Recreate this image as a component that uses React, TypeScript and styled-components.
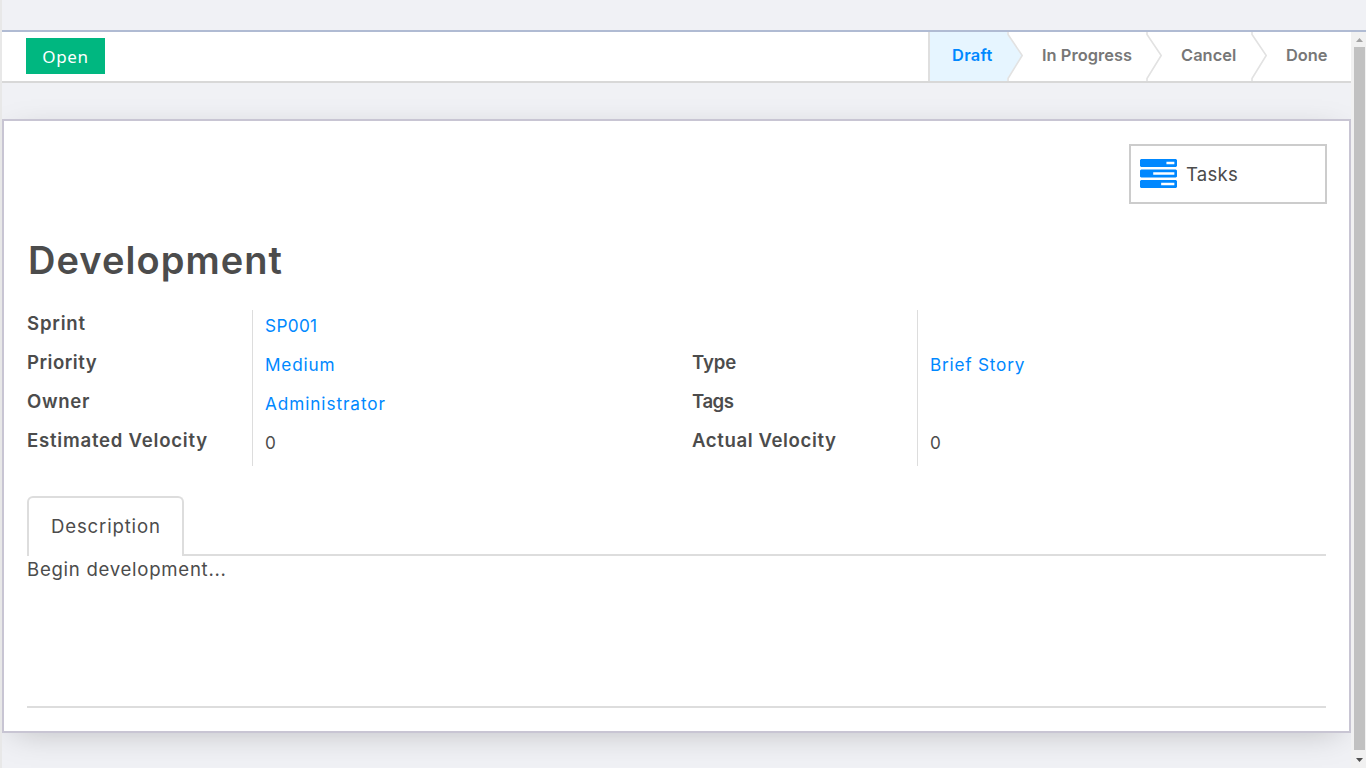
import React from 'react';
import styled, { createGlobalStyle } from 'styled-components';

const GlobalStyle = createGlobalStyle`
  * { box-sizing: border-box; }
  body {
    margin: 0;
    overflow: hidden;
    background: #f0f1f5;
    color: #4c4c4c;
    font-family: Inter, 'Liberation Sans', sans-serif;
  }
`;

const Page = styled.div`
  display: flex;
  flex-direction: column;
  height: 768px;
  border-left: 2px solid #e8e8e8;
`;

const TopStrip = styled.div`
  flex: none;
  height: 32px;
  background: #f0f1f5;
  border-bottom: 2px solid #b0bbd3;
`;

const Body = styled.div`
  display: flex;
  flex: 1;
  min-height: 0;
`;

const Content = styled.main`
  display: flex;
  flex-direction: column;
  flex: 1;
  overflow: hidden;
`;

const StatusBar = styled.header`
  flex: none;
  display: flex;
  justify-content: space-between;
  height: 51px;
  padding-left: 24px;
  background: #fff;
  border-bottom: 2px solid #d8d8d8;
`;

const OpenButton = styled.button`
  width: 79px;
  height: 36px;
  margin-top: 6px;
  padding: 1px 0 0;
  border: 0;
  background: #00b780;
  color: #fff;
  font: 17px/35px 'Noto Sans', sans-serif;
  letter-spacing: 0.7px;
`;

const Steps = styled.nav`
  display: flex;
  border-left: 2px solid #dfdfdf;
`;

const Step = styled.div<{ $width: number; $active?: boolean; $spacing: number }>`
  width: ${(p) => p.$width}px;
  padding-left: ${(p) => (p.$active ? 22 : 19)}px;
  background: ${(p) => (p.$active ? '#e6f5ff' : '#fff')};
  color: ${(p) => (p.$active ? '#0088ff' : '#777')};
  font-size: 16.4px;
  font-weight: 600;
  line-height: 46px;
  letter-spacing: ${(p) => p.$spacing}px;
  white-space: nowrap;
`;

const Chevron = styled.svg`
  display: block;
  width: 16px;
  height: 49px;
`;

const Sheet = styled.section`
  flex: none;
  height: 614px;
  margin-top: 36px;
  padding: 23px 23px 0;
  background: #fff;
  border: 2px solid #c8c5d3;
  box-shadow: 0 7px 34px -12px rgba(0, 0, 0, 0.28);
`;

const StatButton = styled.button`
  display: flex;
  align-items: center;
  gap: 9px;
  width: 198px;
  height: 60px;
  margin: 0 -1px 0 auto;
  padding: 0 0 2px 9px;
  border: 2px solid #ccc;
  background: #fff;
  color: #4c4c4c;
  font: 18.6px/24px Inter, sans-serif;
  letter-spacing: 0.2px;
`;

const StatLabel = styled.span`
  padding-top: 1px;
`;

const Title = styled.h1`
  margin: 31px 0 0;
  padding-left: 1px;
  height: 75px;
  font-size: 38px;
  font-weight: 600;
  line-height: 50px;
  letter-spacing: 1.05px;
`;

const Fields = styled.div`
  display: grid;
  grid-template-columns: 1fr 634px;
`;

const Group = styled.div`
  display: grid;
  grid-template-columns: 225px 1fr;
  grid-auto-rows: 39px;
`;

const Label = styled.label<{ $spacing: number }>`
  font-size: 18.6px;
  font-weight: 600;
  line-height: 27px;
  letter-spacing: ${(p) => p.$spacing}px;
`;

const Value = styled.span<{ $link?: boolean; $spacing: number }>`
  padding-left: 12px;
  border-left: 1px solid #ddd;
  color: ${(p) => (p.$link ? '#0088ff' : '#4c4c4c')};
  font-size: 17.2px;
  line-height: 32px;
  letter-spacing: ${(p) => p.$spacing}px;
`;

const Tabs = styled.div`
  display: flex;
  height: 60px;
  margin-top: 30px;
`;

const Tab = styled.div`
  width: 157px;
  padding-left: 22px;
  border: 2px solid #ddd;
  border-bottom: 0;
  border-radius: 6px 6px 0 0;
  font-size: 18.6px;
  line-height: 57px;
  letter-spacing: 0.83px;
`;

const TabRule = styled.div`
  flex: 1;
  border-bottom: 2px solid #ddd;
`;

const Description = styled.div`
  height: 152px;
  border-bottom: 2px solid #ddd;
  font-size: 18.6px;
  line-height: 27px;
  letter-spacing: 0.72px;
`;

const ScrollTrack = styled.div`
  display: flex;
  flex-direction: column;
  align-items: center;
  width: 15px;
  padding-left: 3px;
  background: #f1f1f1;
`;

const ScrollArrow = styled.svg`
  flex: none;
  width: 12px;
  height: 15px;
`;

const ScrollThumb = styled.div`
  width: 11px;
  height: 703px;
  margin-right: 1px;
  background: #c1c1c1;
`;

type Field = { label: string; ls: number; value: string; vs: number; link?: boolean };

const leftFields: Field[] = [
  { label: 'Sprint', ls: 0.8, value: 'SP001', vs: 0.35, link: true },
  { label: 'Priority', ls: 0.5, value: 'Medium', vs: 0.8, link: true },
  { label: 'Owner', ls: 0.7, value: 'Administrator', vs: 0.92, link: true },
  { label: 'Estimated Velocity', ls: 0.76, value: '0', vs: 0 },
];

const rightFields: Field[] = [
  { label: '', ls: 0, value: '', vs: 0 },
  { label: 'Type', ls: -0.1, value: 'Brief Story', vs: 0.78, link: true },
  { label: 'Tags', ls: -0.5, value: '', vs: 0 },
  { label: 'Actual Velocity', ls: 0.6, value: '0', vs: 0 },
];

const FieldGroup = ({ fields }: { fields: Field[] }) => (
  <Group>
    {fields.map((f, i) => (
      <React.Fragment key={i}>
        <Label $spacing={f.ls}>{f.label}</Label>
        <Value $link={f.link} $spacing={f.vs}>{f.value}</Value>
      </React.Fragment>
    ))}
  </Group>
);

const StepArrow = ({ fill }: { fill: string }) => (
  <Chevron viewBox="0 0 16 49">
    <path d="M0 0V2L15.200 23.5L0 47V49Z" fill={fill} />
    <path d="M1 0V2.5L15.200 23.5L1 46.5V49" fill="none" stroke="#e2e2e2" strokeWidth="1.6" />
  </Chevron>
);

const TasksIcon = () => (
  <svg width="37" height="29" viewBox="0 128 1792 1408" preserveAspectRatio="none">
    <path
      fill="#0088ff"
      d="M1024 1408h640v-128h-640v128zM640 896h1024v-128h-1024v128zM1280 384h384v-128h-384v128zM1792 1216v256q0 26-19 45t-45 19h-1664q-26 0-45-19t-19-45v-256q0-26 19-45t45-19h1664q26 0 45 19t19 45zM1792 704v256q0 26-19 45t-45 19h-1664q-26 0-45-19t-19-45v-256q0-26 19-45t45-19h1664q26 0 45 19t19 45zM1792 192v256q0 26-19 45t-45 19h-1664q-26 0-45-19t-19-45v-256q0-26 19-45t45-19h1664q26 0 45 19t19 45z"
    />
  </svg>
);

export default function App() {
  return (
    <>
      <GlobalStyle />
      <Page>
        <TopStrip />
        <Body>
          <Content>
            <StatusBar>
              <OpenButton>Open</OpenButton>
              <Steps>
                <Step $active $width={77} $spacing={0.3}>Draft</Step>
                <StepArrow fill="#e6f5ff" />
                <Step $width={123} $spacing={0.05}>In Progress</Step>
                <StepArrow fill="#fff" />
                <Step $width={89} $spacing={0.05}>Cancel</Step>
                <StepArrow fill="#fff" />
                <Step $width={84} $spacing={0}>Done</Step>
              </Steps>
            </StatusBar>
            <Sheet>
              <StatButton>
                <TasksIcon />
                <StatLabel>Tasks</StatLabel>
              </StatButton>
              <Title>Development</Title>
              <Fields>
                <FieldGroup fields={leftFields} />
                <FieldGroup fields={rightFields} />
              </Fields>
              <Tabs>
                <Tab>Description</Tab>
                <TabRule />
              </Tabs>
              <Description>Begin development...</Description>
            </Sheet>
          </Content>
          <ScrollTrack>
            <ScrollArrow viewBox="0 0 12 15"><path d="M2 10L5.500 6L9 10Z" fill="#a3a3a3" /></ScrollArrow>
            <ScrollThumb />
            <ScrollArrow viewBox="0 0 12 15"><path d="M2 8L5.500 12L9 8Z" fill="#505050" /></ScrollArrow>
          </ScrollTrack>
        </Body>
      </Page>
    </>
  );
}
